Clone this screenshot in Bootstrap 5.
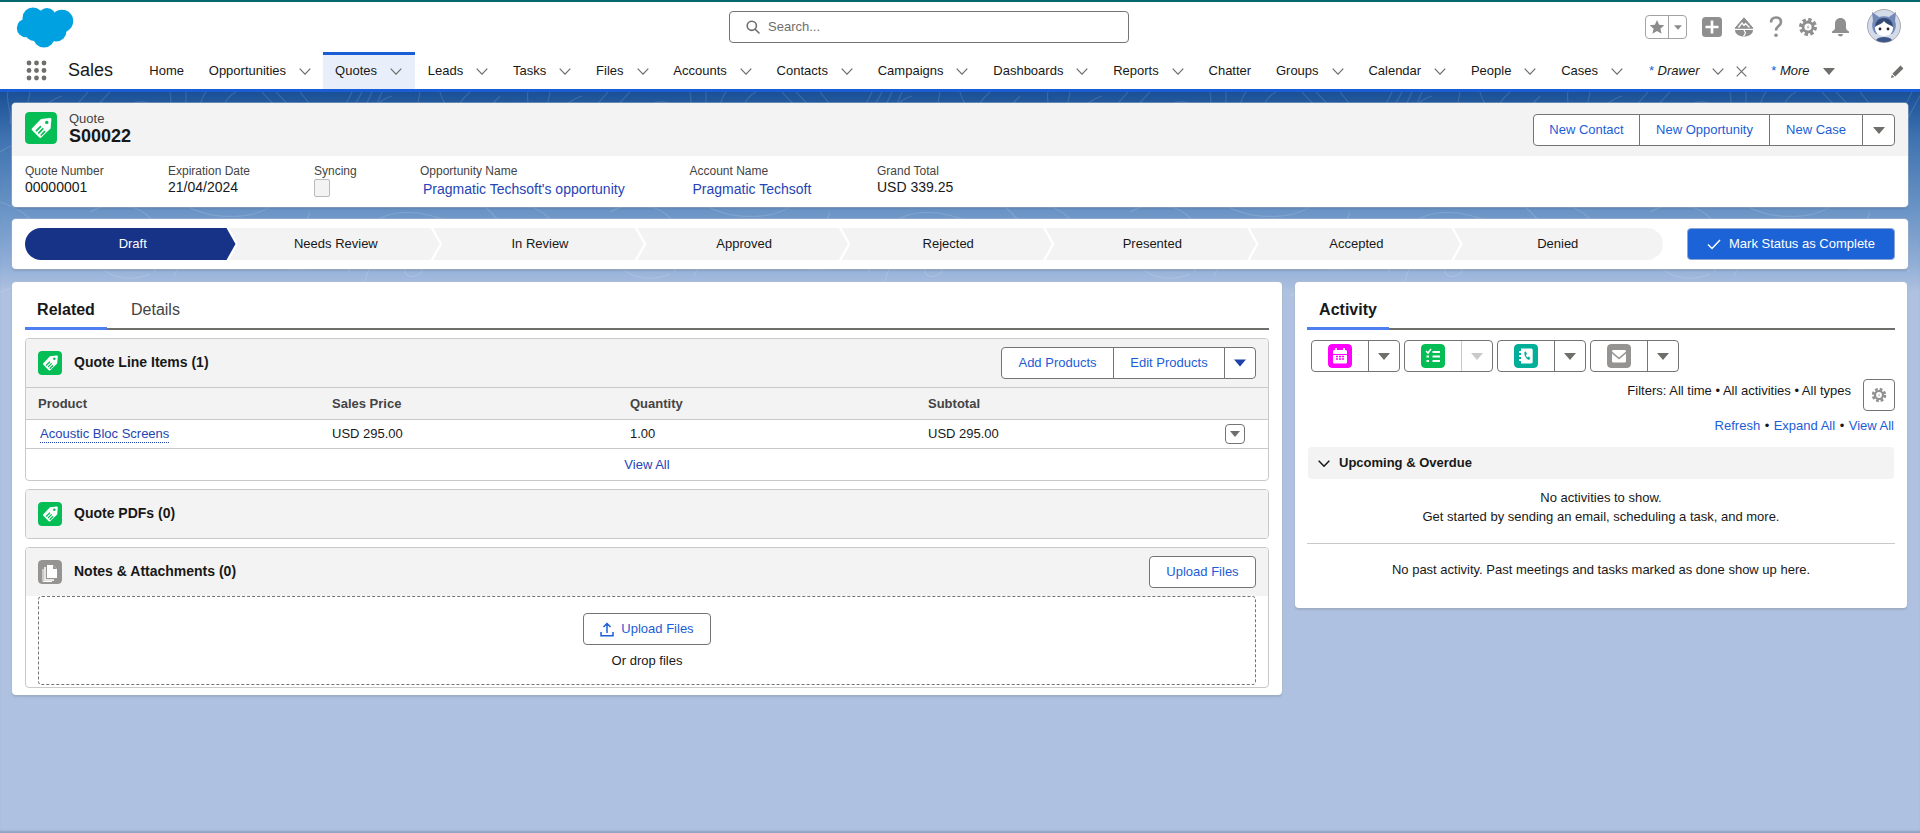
<!doctype html>
<html lang="en">
<head>
<meta charset="utf-8">
<title>Quote S00022</title>
<link href="https://cdn.jsdelivr.net/npm/bootstrap@5.3.0/dist/css/bootstrap.min.css" rel="stylesheet">
<style>
html,body{height:833px;overflow:hidden}
body{font-family:"Liberation Sans",Arial,sans-serif;font-size:13px;color:#181818;background:#aec1e0;line-height:1.25;display:flex;flex-direction:column}
a{text-decoration:none}
.topbar{height:52px;background:#fff;border-top:2px solid #05696b;flex:none}
.hdr-left{flex:0 0 729px;padding:5px 0 0 16px;height:50px}
.searchbox{flex:0 0 400px;height:32px;margin-top:9px;border:1px solid #747474;border-radius:4px;padding:0 14px 0 16px;color:#706e6b;gap:8px;background:#fff}
.hdr-right{flex:1;height:50px;padding-right:19px}
.fav{width:42px;height:24px;border:1px solid #a5a3a1;border-radius:4px;margin-right:9px}
.fav>span{height:100%;display:flex;align-items:center;justify-content:center}
.fav>span:first-child{width:23px;border-right:1px solid #a5a3a1}
.fav>span:last-child{flex:1}
.hicon{width:32px;height:32px;display:flex;align-items:center;justify-content:center}
.avatarwrap{margin-left:11px;width:34px;height:34px;margin-top:-2px}
.navrow{height:40px;background:#fff;border-bottom:3px solid #1b5dd6;flex:none}
.launcher{flex:0 0 26px}
.appname{font-size:18px;width:68.5px;margin-left:21px;white-space:nowrap;padding-bottom:1px}
.tabs-wrap{flex:1;height:37px}
.navi{display:flex;align-items:center;height:37px;padding:2px 12px 0 12.8px;white-space:nowrap;color:#181818}
.navi svg{margin-left:13px;flex:none}
.navi.on{background:#e8eefa;box-shadow:inset 0 3px 0 #1b5dd6;padding:2px 13px 0 12px}
.navi em .st{color:#1b5dd6;font-style:normal}
.navi .xclose{margin-left:12px}
.navi.drw{margin-left:1px}
.navi.mor{margin-left:-1px}
.editnav{margin-left:auto;padding-right:16px;padding-top:2px}
.pagebody{flex:1;padding:11px 12px 0;background-color:#aec1e0;
background-image:url("data:image/svg+xml,%3Csvg xmlns='http://www.w3.org/2000/svg' width='520' height='205' fill='none' stroke='%23fff' stroke-opacity='.13' stroke-width='1.1'%3E%3Cpath d='M8 0c-3 10 5 20 2 32M30 0l-4 20M62 4c-18 6-24 18-28 30M88 0c-10 12-18 18-26 34M110 0c-8 8-14 14-18 22M128 14c10-6 20-6 30 2M170 0c2 8 0 20 0 30M186 0v24M206 0c-8 8-4 22-14 34M236 0c-12 6-14 18-18 32M262 0c8 10 20 18 26 30M276 0c10 10 18 18 24 28M300 0c6 8 12 14 18 22M352 0l-12 24M362 0l-14 26M372 0l-12 26M382 0l-10 24M392 4c-14 4-20 14-22 26M420 0c-2 10-4 20 0 30M440 0c2 10 8 14 10 22M470 0c-10 8-14 18-18 28M500 4c-8 8-14 14-16 24'/%3E%3Cpath d='M0 60c20-14 50-14 70 4 14 14 40 14 60 0M120 50c-10 16 0 34 18 40M200 70c20 20 50 20 70 0M300 40c24 10 40 30 34 54M380 60c20-10 40-10 60 4M460 44c-20 14-30 40-10 60M0 110c30 10 50 30 40 60M90 120c24-14 50-8 66 12M180 110c30 20 80 20 100-4M310 120c-10 20 10 40 30 40M380 126c24-10 54-6 80 10M480 110c16 14 30 30 40 50M10 168c30-18 70-18 90 6 10 12 30 16 50 8M170 150l-16 30M190 150l-16 34M210 160c20-14 50-14 66 8 8 12 30 14 44 0M340 150c-4 16 4 24 10 30M380 158c-8 12-14 22-16 36M400 170c8-6 18-6 22 4 2 8-10 14-16 8-4-6 0-12 6-12M440 150c20 14 60 14 80 0M0 200c30-12 60-12 90 0M120 200c20-10 50-10 70 2M250 204c24-16 60-14 80-2M370 196l-10 9M420 200c20-10 50-8 80 0'/%3E%3C/svg%3E"),linear-gradient(180deg,#1a5096 0,#3e72b0 45px,#6a94c6 118px,#8fadd6 170px,#aec1e0 200px);
background-repeat:repeat-x,no-repeat;background-size:520px 205px,100% 205px;box-shadow:inset 0 -3px 2px -1px rgba(110,125,155,.45)}
.sfcard{background:#fff;border:0;border-radius:4px;box-shadow:0 2px 2px rgba(0,0,0,.1),0 0 0 1px rgba(180,190,205,.45)}
.hl{height:104px;overflow:hidden}
.hl-top{height:53px;background:#f3f3f3;padding:9px 13px 0}
.obj{width:32px;height:32px;border-radius:4px;flex:none}
.objtxt{margin-left:12px}
.objtype{color:#444;line-height:14px}
.objname{font-size:18px;font-weight:700;line-height:22px;margin-top:-1px}
.sfbtns{height:32px;margin-top:2px}
.rl-h .sfbtns{margin-top:0}
.sfbtn{font-size:13px;line-height:30px;padding:0;height:32px;color:#1b5dd6;background:#fff;border:1px solid #747474;border-radius:0;margin-left:-1px;display:flex;align-items:center;justify-content:center}
.sfbtn:first-child{border-radius:4px 0 0 4px;margin-left:0}
.sfbtn:last-child{border-radius:0 4px 4px 0}
.w1{width:107px}.w2{width:131px}.w3{width:94px}.w4{width:33px}
.wadd{width:113px}.wedit{width:112px}.wcar{width:32px}
.hl-fields{padding:8px 13px 0;display:flex}
.lbl{font-size:12px;color:#444;line-height:14px}
.val{font-size:14px;line-height:18px;margin-top:0}
.fld1{width:143px}.fld2{width:146px}.fld3{width:106px}.fld4{width:269.5px}.fld5{width:187.5px}
.lnk{color:#2544b5}
.fl{margin-left:3px;display:block;margin-top:3px;line-height:17px}
.cbx{width:16px;height:18px;border:1px solid #b9b9b9;background:#f3f3f3;border-radius:2px;margin-top:1px}
.pathcard{height:50px;margin-top:12px;padding:9px 13px}
.pathrow{display:flex;height:32px}
.pstep{flex:0 0 210.5px;margin-right:-6.4px;height:32px;background:#f3f3f3;display:flex;align-items:center;justify-content:center;padding-left:3px;clip-path:polygon(0 0,calc(100% - 9px) 0,100% 50%,calc(100% - 9px) 100%,0 100%,9px 50%)}
.pstep.first{background:#163388;color:#fff;border-radius:16px 0 0 16px;clip-path:polygon(0 0,calc(100% - 9px) 0,100% 50%,calc(100% - 9px) 100%,0 100%);padding-left:5px}
.pstep.last{border-radius:0 16px 16px 0;clip-path:polygon(0 0,100% 0,100% 100%,0 100%,9px 50%);padding-left:0;padding-right:1px;flex-basis:209px;margin-right:0}
.markbtn{width:208px;height:32px;background:#1b63d6;color:#fff;border:1px solid #8ba4d0;border-radius:4px;font-size:13px;display:flex;align-items:center;justify-content:center;gap:8px;margin-left:auto;padding:0}
.cols{display:flex;gap:13px;margin-top:13px;align-items:flex-start}
.leftc{flex:0 0 1270px;height:413px;padding:0 13px}
.rightc{flex:0 0 612px;height:326px;padding:0 12px}
.tabsr{height:48px;border-bottom:2px solid #706e6b;display:flex;align-items:flex-end}
.tb{font-size:16px;height:48px;line-height:18px;padding:19px 12px 0;color:#444;margin-bottom:-2px}
.tb.act{color:#181818;font-weight:700;box-shadow:inset 0 -3px 0 #4d7ff0;width:82px;text-align:center;padding:19px 0 0}
.tb.act+.tb{margin-left:12px}
.rl{border:1px solid #c9c9c9;border-radius:4px;margin-top:8px;overflow:hidden}
.rl-h{background:#f3f3f3;padding:0 12px;display:flex;align-items:center;height:48px;gap:12px}
.rl-h h2{font-size:14px;font-weight:700;margin:-2px 0 0;color:#181818;line-height:18px}
.ico24{width:24px;height:24px;border-radius:4px;flex:none}
.rl table{margin:0;table-layout:fixed;width:100%;font-size:13px}
.rl th,.rl td{border-color:#c9c9c9;padding:0 0 0 12px;vertical-align:middle;color:#181818;font-weight:400;box-shadow:none}
.rl thead th{background:#f3f3f3;height:32px;font-weight:700;color:#444;border-top:1px solid #c9c9c9;border-bottom:1px solid #c9c9c9;padding-top:1px}
.rl tbody td{height:29px;border-bottom:1px solid #c9c9c9}
.c1{width:294px}.c2{width:298px}.c3{width:298px}.c4{width:297px}
.dotl{border-bottom:1px dotted #2544b5;margin-left:2px;padding-bottom:1px}
.rowmenu{width:20px;height:20px;border:1px solid #747474;border-radius:4px;background:#fff;display:flex;align-items:center;justify-content:center;margin-left:auto;margin-right:25px;padding:0}
.viewall{height:31px;display:flex;align-items:center;justify-content:center;padding-top:1px}
.upbtn{width:107px;height:32px;color:#1b5dd6;background:#fff;border:1px solid #747474;border-radius:4px;font-size:13px;padding:0;margin-left:auto}
.dz{border:1px dashed #747474;border-radius:4px;height:89px;margin:0 12px 2px;text-align:center;padding-top:16px}
.upbtn2{display:inline-flex;align-items:center;justify-content:center;gap:7px;width:128px;height:32px;color:#1b5dd6;background:#fff;border:1px solid #747474;border-radius:4px;font-size:13px;padding:0}
.dzt{margin-top:8px;line-height:16px}
.ag{display:flex;gap:4px;padding:10px 4px 0}
.agb{display:flex;height:32px;width:89px;border:1px solid #747474;border-radius:4px;overflow:hidden;background:#fff}
.agb>span:first-child{flex:0 0 57px;border-right:1px solid #747474;display:flex;align-items:center;justify-content:center}
.agb>span:last-child{flex:1;display:flex;align-items:center;justify-content:center}
.agb .off{box-shadow:0 0 0 1px #c9c9c9}
.filt{display:flex;justify-content:flex-end;gap:12px;margin-top:7px}
.filt>span{padding-top:4px}
.gearb{width:32px;height:32px;border:1px solid #747474;border-radius:4px;background:#fff;display:flex;align-items:center;justify-content:center;padding:0}
.alinks{display:flex;justify-content:flex-end;gap:4.5px;margin-top:7px;padding-right:1px;line-height:16px}
.alinks a{color:#1b5dd6}
.upc{background:#f3f3f3;border-radius:4px;height:32px;display:flex;align-items:center;gap:9px;margin:13px 1px 0;padding-left:10px;font-weight:700}
.empty{text-align:center;line-height:19px;margin-top:9px;padding-bottom:17px;border-bottom:1px solid #c9c9c9}
.nopast{text-align:center;margin-top:18px}
</style>
</head>
<body>
<svg width="0" height="0" class="d-none">
<defs>
<symbol id="chev" viewBox="0 0 12 7"><path d="M.7.7 6 6.2 11.3.7" fill="none" stroke="#706e6b" stroke-width="1.2"/></symbol>
<symbol id="tri" viewBox="0 0 12 7"><path d="M0 0h12L6 7z"/></symbol>
<symbol id="tag" viewBox="0 0 32 32"><rect width="32" height="32" rx="4" fill="#04bd54"/><path d="M15 9.5l9-.9c.9-.1 1.5.5 1.4 1.3l-.8 9.2L15.3 28c-.6.6-1.4.6-2 0l-7.2-7.2c-.6-.6-.6-1.4 0-2z" transform="translate(1 -2.5)" fill="#fff"/><circle cx="21.8" cy="10.4" r="1.7" fill="#04bd54"/><path d="M11.5 18.7l4-4M13.8 20.8l4-4M16.2 23l3.4-3.4" stroke="#04bd54" stroke-width="1.7" stroke-linecap="round"/></symbol>
<symbol id="gear" viewBox="0 0 20 20"><circle cx="10" cy="10" r="6.4" fill="#8f8f8f"/><circle cx="10" cy="10" r="7.4" fill="none" stroke="#8f8f8f" stroke-width="3.2" stroke-dasharray="3.4 2.41"/><circle cx="10" cy="10" r="3.6" fill="#fff"/><path d="M10.9 7.6 8.8 10.6h1.4l-1 2.2 2.1-3h-1.4z" fill="#8f8f8f"/></symbol>
</defs>
</svg>

<header class="topbar d-flex">
  <div class="hdr-left">
    <svg width="58" height="41" viewBox="0 0 58 41" fill="#00a1e0"><circle cx="17" cy="11" r="10.5"/><circle cx="31" cy="10" r="9"/><circle cx="46" cy="14" r="11.2"/><circle cx="10" cy="21" r="9.2"/><circle cx="28" cy="30" r="10.6"/><circle cx="40" cy="24" r="10.5"/><circle cx="18" cy="25" r="9"/><rect x="15" y="10" width="25" height="18"/></svg>
  </div>
  <div class="searchbox d-flex align-items-center">
    <svg width="14" height="14" viewBox="0 0 14 14" fill="none" stroke="#706e6b" stroke-width="1.6"><circle cx="5.8" cy="5.8" r="4.6"/><path d="M9.2 9.2 13 13" stroke-linecap="round"/></svg>
    <span>Search...</span>
  </div>
  <div class="hdr-right d-flex align-items-center justify-content-end">
    <div class="fav d-flex">
      <span><svg width="16" height="16" viewBox="0 0 16 16" fill="#8b8b8b"><path d="m8 1 2.1 4.8 5.2.5-3.9 3.4 1.2 5.1L8 12.1l-4.6 2.7 1.2-5.1L.7 6.3l5.2-.5z"/></svg></span>
      <span><svg width="8" height="5"><use href="#tri" fill="#8b8b8b"/></svg></span>
    </div>
    <div class="hicon"><svg width="20" height="20" viewBox="0 0 20 20"><rect width="20" height="20" rx="3.5" fill="#8f8f8f"/><path d="M10 3.500v13M3.500 10h13" stroke="#fff" stroke-width="2.6"/></svg></div>
    <div class="hicon"><svg width="20" height="20" viewBox="0 0 20 20"><path d="M10 .8 19 11.200H1z" fill="#8f8f8f" stroke="#8f8f8f" stroke-linejoin="round"/><path d="M4.500 10.500 8 6l2 2.500L11.500 6.500 15.500 10.500" fill="none" stroke="#fff" stroke-width="1.300"/><path d="M1 13h18c0 4-4 6.500-9 6.500S1 17 1 13z" fill="#8f8f8f"/><path d="m10 13 1.500 3-2 3.500" fill="none" stroke="#fff" stroke-width="1.200"/></svg></div>
    <div class="hicon"><svg width="14" height="22" viewBox="0 0 14 22" fill="none"><path d="M2 6.500C2 3 4 1.500 7 1.500s5 1.800 5 4.500c0 4-5 4-5 8.500" stroke="#8f8f8f" stroke-width="2.600"/><circle cx="7" cy="19.300" r="1.800" fill="#8f8f8f"/></svg></div>
    <div class="hicon"><svg width="20" height="20"><use href="#gear"/></svg></div>
    <div class="hicon"><svg width="19" height="20" viewBox="0 0 19 20" fill="#8f8f8f"><path d="M9.500 1C6 1 4 3.500 4 7v4c0 1.500-1.500 2.500-3 3.500V16h17v-1.500C16.500 13.500 15 12.500 15 11V7c0-3.500-2-6-5.500-6z"/><path d="M7 17h5c0 1.500-1 2.500-2.500 2.500S7 18.500 7 17z"/></svg></div>
    <div class="avatarwrap"><svg width="34" height="34" viewBox="0 0 34 34"><circle cx="17" cy="17" r="16.500" fill="#d3dbea" stroke="#a9a9a9"/><path d="M6 12 5 3l7 5c3-1 7-1 10 0l7-5-1 9c2 5 0 11-3 13H9c-3-2-5-8-3-13z" fill="#7389b8"/><path d="M9 31c2-4 14-4 16 0-4 3-12 3-16 0z" fill="#3d5688"/><path d="M8 19c0-5 4-8 9-8s9 3 9 8-4 8-9 8-9-3-9-8z" fill="#fff"/><path d="M8 18c2-2 7-3 9-6 2 3 7 4 9 6 0-5-3-9-9-9s-9 4-9 9z" fill="#344a78"/><circle cx="13" cy="20" r="1.400" fill="#223"/><circle cx="21" cy="20" r="1.400" fill="#223"/></svg></div>
  </div>
</header>

<nav class="navrow d-flex align-items-center">
  <div class="launcher"></div>
  <svg width="21" height="21" viewBox="0 0 21 21" fill="#706e6b"><circle cx="3" cy="3" r="2.400"/><circle cx="10.500" cy="3" r="2.400"/><circle cx="18" cy="3" r="2.400"/><circle cx="3" cy="10.500" r="2.400"/><circle cx="10.500" cy="10.500" r="2.400"/><circle cx="18" cy="10.500" r="2.400"/><circle cx="3" cy="18" r="2.400"/><circle cx="10.500" cy="18" r="2.400"/><circle cx="18" cy="18" r="2.400"/></svg>
  <div class="appname">Sales</div>
  <div class="tabs-wrap d-flex">
    <a class="navi" href="#">Home</a>
    <a class="navi" href="#">Opportunities<svg width="12" height="7"><use href="#chev"/></svg></a>
    <a class="navi on" href="#">Quotes<svg width="12" height="7"><use href="#chev"/></svg></a>
    <a class="navi" href="#">Leads<svg width="12" height="7"><use href="#chev"/></svg></a>
    <a class="navi" href="#">Tasks<svg width="12" height="7"><use href="#chev"/></svg></a>
    <a class="navi" href="#">Files<svg width="12" height="7"><use href="#chev"/></svg></a>
    <a class="navi" href="#">Accounts<svg width="12" height="7"><use href="#chev"/></svg></a>
    <a class="navi" href="#">Contacts<svg width="12" height="7"><use href="#chev"/></svg></a>
    <a class="navi" href="#">Campaigns<svg width="12" height="7"><use href="#chev"/></svg></a>
    <a class="navi" href="#">Dashboards<svg width="12" height="7"><use href="#chev"/></svg></a>
    <a class="navi" href="#">Reports<svg width="12" height="7"><use href="#chev"/></svg></a>
    <a class="navi" href="#">Chatter</a>
    <a class="navi" href="#">Groups<svg width="12" height="7"><use href="#chev"/></svg></a>
    <a class="navi" href="#">Calendar<svg width="12" height="7"><use href="#chev"/></svg></a>
    <a class="navi" href="#">People<svg width="12" height="7"><use href="#chev"/></svg></a>
    <a class="navi" href="#">Cases<svg width="12" height="7"><use href="#chev"/></svg></a>
    <a class="navi drw" href="#"><em><span class="st">*</span> Drawer</em><svg width="12" height="7"><use href="#chev"/></svg><svg class="xclose" width="11" height="11" viewBox="0 0 11 11"><path d="m.7.7 9.6 9.600M10.300.7.7 10.300" stroke="#706e6b" stroke-width="1.200"/></svg></a>
    <a class="navi mor" href="#"><em><span class="st">*</span> More</em><svg width="12" height="7"><use href="#tri" fill="#706e6b"/></svg></a>
    <div class="editnav d-flex align-items-center"><svg width="13" height="14" viewBox="0 0 13 14" fill="#706e6b"><path d="M9.500.6 12.400 3.500 4.300 11.600 1.400 8.700z"/><path d="M.9 9.700 3.300 12.100 0 13z"/></svg></div>
  </div>
</nav>

<main class="pagebody">
  <section class="card sfcard hl">
    <div class="hl-top d-flex">
      <svg class="obj"><use href="#tag"/></svg>
      <div class="objtxt">
        <div class="objtype">Quote</div>
        <div class="objname">S00022</div>
      </div>
      <div class="btn-group sfbtns ms-auto">
        <button class="btn sfbtn w1">New Contact</button>
        <button class="btn sfbtn w2">New Opportunity</button>
        <button class="btn sfbtn w3">New Case</button>
        <button class="btn sfbtn w4"><svg width="12" height="7"><use href="#tri" fill="#706e6b"/></svg></button>
      </div>
    </div>
    <div class="hl-fields">
      <div class="fld1"><div class="lbl">Quote Number</div><div class="val">00000001</div></div>
      <div class="fld2"><div class="lbl">Expiration Date</div><div class="val">21/04/2024</div></div>
      <div class="fld3"><div class="lbl">Syncing</div><div class="cbx"></div></div>
      <div class="fld4"><div class="lbl">Opportunity Name</div><a class="val lnk fl" href="#">Pragmatic Techsoft's opportunity</a></div>
      <div class="fld5"><div class="lbl">Account Name</div><a class="val lnk fl" href="#">Pragmatic Techsoft</a></div>
      <div><div class="lbl">Grand Total</div><div class="val">USD 339.25</div></div>
    </div>
  </section>

  <section class="card sfcard pathcard">
    <div class="pathrow">
      <div class="pstep first">Draft</div>
      <div class="pstep">Needs Review</div>
      <div class="pstep">In Review</div>
      <div class="pstep">Approved</div>
      <div class="pstep">Rejected</div>
      <div class="pstep">Presented</div>
      <div class="pstep">Accepted</div>
      <div class="pstep last">Denied</div>
      <button class="btn markbtn"><svg width="14" height="11" viewBox="0 0 14 11" fill="none" stroke="#fff" stroke-width="1.500"><path d="m1 5.500 4 4 8-8.500"/></svg>Mark Status as Complete</button>
    </div>
  </section>

  <div class="cols">
    <section class="card sfcard leftc">
      <div class="tabsr"><div class="tb act">Related</div><div class="tb">Details</div></div>

      <div class="rl">
        <div class="rl-h">
          <svg class="ico24"><use href="#tag" width="24" height="24"/></svg>
          <h2>Quote Line Items (1)</h2>
          <div class="btn-group ms-auto sfbtns">
            <button class="btn sfbtn wadd">Add Products</button>
            <button class="btn sfbtn wedit">Edit Products</button>
            <button class="btn sfbtn wcar"><svg width="12" height="8"><use href="#tri" fill="#1e40a8"/></svg></button>
          </div>
        </div>
        <table class="table">
          <thead><tr><th class="c1">Product</th><th class="c2">Sales Price</th><th class="c3">Quantity</th><th class="c4">Subtotal</th><th></th></tr></thead>
          <tbody><tr><td><a class="lnk dotl" href="#">Acoustic Bloc Screens</a></td><td>USD 295.00</td><td>1.00</td><td>USD 295.00</td><td><button class="btn rowmenu"><svg width="10" height="6"><use href="#tri" fill="#706e6b"/></svg></button></td></tr></tbody>
        </table>
        <div class="viewall"><a class="lnk" href="#">View All</a></div>
      </div>

      <div class="rl">
        <div class="rl-h">
          <svg class="ico24"><use href="#tag" width="24" height="24"/></svg>
          <h2>Quote PDFs (0)</h2>
        </div>
      </div>

      <div class="rl">
        <div class="rl-h">
          <svg class="ico24" viewBox="0 0 24 24"><rect width="24" height="24" rx="4" fill="#969492"/><path d="M9 5h6l4 4v9H9z" fill="#fff"/><path d="M15 5v4h4" fill="#969492"/><path d="M7 7v13h9" fill="none" stroke="#fff" stroke-width="1.500"/><path d="M5 9v12.500h9" fill="none" stroke="#fff" stroke-width="1"/></svg>
          <h2>Notes &amp; Attachments (0)</h2>
          <button class="btn upbtn">Upload Files</button>
        </div>
        <div class="dz">
          <button class="btn upbtn2"><svg width="14" height="15" viewBox="0 0 14 15" fill="none" stroke="#1b5dd6" stroke-width="1.500"><path d="M7 11V2M3.500 5 7 1.500 10.500 5"/><path d="M1 10v3.800h12V10"/></svg>Upload Files</button>
          <div class="dzt">Or drop files</div>
        </div>
      </div>
    </section>

    <section class="card sfcard rightc">
      <div class="tabsr"><div class="tb act">Activity</div></div>
      <div class="ag">
        <div class="agb"><span><svg class="ico24" viewBox="0 0 24 24"><rect width="24" height="24" rx="4" fill="#f0f"/><path d="M5 7.500c0-1 .7-1.500 1.500-1.500h11c.8 0 1.500.5 1.500 1.500V10H5zM5 11h14v7c0 1-.7 1.500-1.500 1.500h-11C5.700 19.500 5 19 5 18z" fill="#fff"/><path d="M8 4v3M16 4v3" stroke="#fff" stroke-width="1.800"/><path d="M8 12.500h2M11 12.500h2M14 12.500h2M8 15h2M11 15h2M14 15h2" stroke="#f0f" stroke-width="1.500"/></svg></span><span><svg width="12" height="7"><use href="#tri" fill="#706e6b"/></svg></span></div>
        <div class="agb"><span><svg class="ico24" viewBox="0 0 24 24"><rect width="24" height="24" rx="4" fill="#04bd54"/><path d="m5 7 2 2 3-4" fill="none" stroke="#fff" stroke-width="1.500"/><path d="M11.500 8H19M11.500 12.500H19M11.500 17H19M5.500 12.500h2.500M5.500 17h2.500" stroke="#fff" stroke-width="1.800"/></svg></span><span class="off"><svg width="12" height="7"><use href="#tri" fill="#c9c9c9"/></svg></span></div>
        <div class="agb"><span><svg class="ico24" viewBox="0 0 24 24"><rect width="24" height="24" rx="4" fill="#00ae9a"/><path d="M7 4.500h10c1 0 1.700.7 1.700 1.700v11.600c0 1-.7 1.700-1.700 1.700H7z" fill="#fff"/><path d="M5 8h3M5 12h3M5 16h3" stroke="#fff" stroke-width="1.800"/><path d="M10.500 8c-.6 3.500 1.500 6.700 4.500 8l1.500-2-2.300-1.400-1 .8c-.8-.7-1.200-1.700-1.200-2.700l1-.7L11.800 7.500z" fill="#00ae9a"/></svg></span><span><svg width="12" height="7"><use href="#tri" fill="#706e6b"/></svg></span></div>
        <div class="agb"><span><svg class="ico24" viewBox="0 0 24 24"><rect width="24" height="24" rx="4" fill="#969492"/><path d="M5 7.500c0-.8.500-1.500 1.500-1.500h11c1 0 1.500.7 1.500 1.500L12 13.500z" fill="#fff"/><path d="M5 9.500v7.500c0 .8.500 1.500 1.500 1.500h11c1 0 1.500-.7 1.500-1.500V9.500L12 15.500z" fill="#fff"/></svg></span><span><svg width="12" height="7"><use href="#tri" fill="#706e6b"/></svg></span></div>
      </div>
      <div class="filt"><span>Filters: All time • All activities • All types</span><button class="btn gearb"><svg width="16" height="16"><use href="#gear"/></svg></button></div>
      <div class="alinks"><a href="#">Refresh</a><span>•</span><a href="#">Expand All</a><span>•</span><a href="#">View All</a></div>
      <div class="upc"><svg width="12" height="7"><path d="M.7.7 6 6.200 11.300.7" fill="none" stroke="#181818" stroke-width="1.500"/></svg>Upcoming &amp; Overdue</div>
      <div class="empty">No activities to show.<br>Get started by sending an email, scheduling a task, and more.</div>
      <div class="nopast">No past activity. Past meetings and tasks marked as done show up here.</div>
    </section>
  </div>
</main>
<script src="https://cdn.jsdelivr.net/npm/bootstrap@5.3.0/dist/js/bootstrap.bundle.min.js"></script>
</body>
</html>
